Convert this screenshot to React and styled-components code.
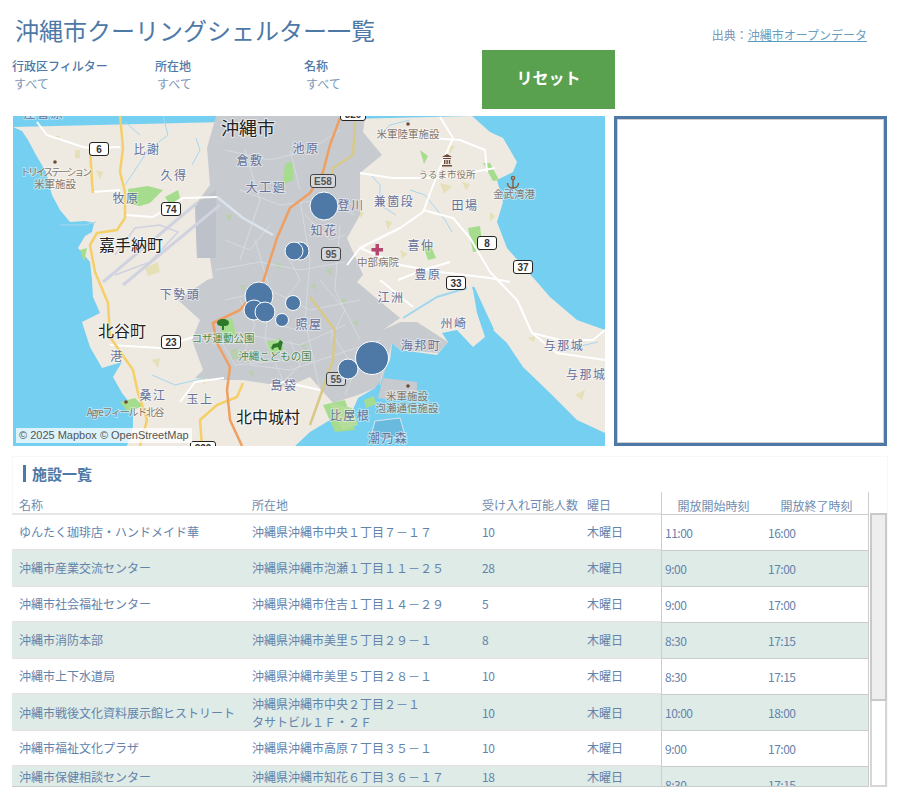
import React from 'react'
import styled, { createGlobalStyle } from 'styled-components'

const BLUE = '#4e79a7'

const GlobalStyle = createGlobalStyle`
  html, body {
    margin: 0;
    padding: 0;
    background: #fff;
    overflow: hidden;
  }
  body {
    font-family: "Noto Sans CJK JP", "Noto Sans", sans-serif;
    color: ${BLUE};
  }
`

const Page = styled.div`
  width: 899px;
  height: 799px;
  padding: 0 11px 0 12px;
  box-sizing: border-box;
`

const Header = styled.header`
  display: flex;
  justify-content: space-between;
  align-items: flex-start;
  height: 50px;
`

const Title = styled.h1`
  margin: 12px 0 0 3px;
  font-size: 24px;
  line-height: 36px;
  font-weight: 400;
  color: ${BLUE};
`

const Source = styled.div`
  margin: 26px 21px 0 0;
  font-size: 12px;
  line-height: 18px;
  color: #7b94b3;
`

const SourceLink = styled.a`
  color: #6a9fc0;
  text-decoration: underline;
  text-decoration-color: #5b9bbf;
`

const Filters = styled.div`
  display: grid;
  grid-template-columns: 143px 149px 178px 133px;
  height: 59px;
  margin-bottom: 7px;
`

const Filter = styled.div`
  padding-top: 7px;
`

const FilterLabel = styled.div`
  font-size: 12px;
  line-height: 18px;
  font-weight: 500;
  color: ${BLUE};
`

const FilterValue = styled.div`
  font-size: 12px;
  line-height: 18px;
  padding-left: 2px;
  color: #7d97b8;
`

const ResetButton = styled.button`
  border: none;
  background: #59a14f;
  color: #fff;
  font-family: inherit;
  font-size: 16px;
  font-weight: 700;
  padding: 0 0 6px;
`

const MapRow = styled.section`
  display: flex;
  gap: 9px;
  height: 331px;
`

const MapFrame = styled.div`
  position: relative;
  width: 592px;
  height: 330px;
  margin-left: 1px;
  overflow: hidden;
  background: #75cff0;
`

const MapSvg = styled.svg`
  display: block;
`

const Attribution = styled.div`
  position: absolute;
  left: 3px;
  bottom: 3px;
  padding: 0 3px;
  height: 15px;
  line-height: 15px;
  font-family: "Liberation Sans", sans-serif;
  font-size: 11px;
  color: #555;
  background: rgba(255, 255, 255, 0.75);
`

const SidePanel = styled.div`
  width: 273px;
  height: 330px;
  box-sizing: border-box;
  border: 3px solid ${BLUE};
  outline: 1px solid #cfcfcf;
  outline-offset: -4px;
  background: #fff;
`

const Card = styled.section`
  margin-top: 9px;
  width: 876px;
  height: 332px;
  box-sizing: border-box;
  border: 1px solid #f8f8f8;
  border-bottom: none;
`

const CardTitle = styled.h2`
  margin: 8px 0 0 10px;
  padding-left: 6px;
  border-left: 3px solid ${BLUE};
  font-size: 15px;
  line-height: 17px;
  font-weight: 700;
  color: ${BLUE};
`

const TableWrap = styled.div`
  display: flex;
  margin-top: 10px;
  height: 295px;
`

const Pane = styled.div`
  display: flex;
  flex-direction: column;
  height: 295px;
  box-sizing: border-box;
  border-bottom: 1px solid #cbcbcb;
  overflow: hidden;
  flex: none;
`

const LeftPane = styled(Pane)`
  width: 649px;
  margin-left: -1px;
`

const RightPane = styled(Pane)`
  width: 208px;
  border-left: 1px solid #cdcdcd;
  border-right: 1px solid #cdcdcd;
`

const LeftGrid = styled.div`
  display: grid;
  grid-template-columns: 233px 230px 105px 81px;
  align-items: center;
  flex: none;
`

const RightGrid = styled.div`
  display: grid;
  grid-template-columns: 103px 103px;
  align-items: center;
  flex: none;
`

const HeadLeft = styled(LeftGrid)`
  height: 23px;
  box-sizing: border-box;
  border-bottom: 2px solid #e6e6e6;
  align-items: end;
`

const HeadRight = styled(RightGrid)`
  height: 23px;
  box-sizing: border-box;
  border-bottom: 1px solid #cdcdcd;
  align-items: end;
`

const HeadCell = styled.div`
  padding-left: 7px;
  font-size: 12px;
  line-height: 16px;
  color: #6f8cb0;
  white-space: nowrap;
`

const HeadCellCenter = styled(HeadCell)`
  padding-left: 0;
  text-align: center;
`

const BodyLeft = styled(LeftGrid)`
  height: ${p => (p.$short ? 20 : 36)}px;
  box-sizing: border-box;
  background: ${p => (p.$striped ? '#deebe7' : '#fff')};
  border-bottom: ${p => (p.$short ? 'none' : '2px solid #e4e6e5')};
`

const BodyRight = styled(RightGrid)`
  height: 36px;
  box-sizing: border-box;
  background: ${p => (p.$striped ? '#deebe7' : '#fff')};
  border-bottom: 1px solid #cbcbcb;
`

const Cell = styled.div`
  padding-left: 7px;
  font-size: 12px;
  line-height: 18px;
  color: #6483ab;
  white-space: nowrap;
`

const NumberCell = styled(Cell)`
  letter-spacing: -0.5px;
`

const TimeCell = styled(NumberCell)`
  padding-left: 3px;
`

const Scrollbar = styled.div`
  position: relative;
  margin-top: 21px;
  margin-left: 1px;
  width: 18px;
  height: 274px;
  box-sizing: border-box;
  border: 2px solid #d6d6d6;
  border-top: none;
  background: #fff;
`

const Thumb = styled.div`
  position: absolute;
  left: -2px;
  right: -2px;
  top: 0;
  height: 188px;
  box-sizing: border-box;
  background: #eeeeee;
  border: 2px solid #c9c9c9;
`

const rows = [
  { name: 'ゆんたく珈琲店・ハンドメイド華', addr: ['沖縄県沖縄市中央１丁目７－１７'], cap: 10, open: '11:00', close: '16:00' },
  { name: '沖縄市産業交流センター', addr: ['沖縄県沖縄市泡瀬１丁目１１－２５'], cap: 28, open: '9:00', close: '17:00' },
  { name: '沖縄市社会福祉センター', addr: ['沖縄県沖縄市住吉１丁目１４－２９'], cap: 5, open: '9:00', close: '17:00' },
  { name: '沖縄市消防本部', addr: ['沖縄県沖縄市美里５丁目２９－１'], cap: 8, open: '8:30', close: '17:15' },
  { name: '沖縄市上下水道局', addr: ['沖縄県沖縄市美里５丁目２８－１'], cap: 10, open: '8:30', close: '17:15' },
  { name: '沖縄市戦後文化資料展示館ヒストリート', addr: ['沖縄県沖縄市中央２丁目２－１', 'タサトビル１Ｆ・２Ｆ'], cap: 10, open: '10:00', close: '18:00' },
  { name: '沖縄市福祉文化プラザ', addr: ['沖縄県沖縄市高原７丁目３５－１'], cap: 10, open: '9:00', close: '17:00' },
  { name: '沖縄市保健相談センター', addr: ['沖縄県沖縄市知花６丁目３６－１７'], cap: 18, open: '8:30', close: '17:15', short: true },
]

const land = '13,127 22,131 28,140 36,155 46,172 52,195 60,210 70,222 85,221 94,223 92,232 85,236 78,248 90,262 92,280 93,297 100,313 82,322 90,347 102,368 122,362 113,377 122,393 133,407 133,427 127,446 295,446 310,432 330,420 345,428 358,398 375,388 390,360 392,343 400,350 437,355 448,342 442,333 457,330 473,347 485,337 477,313 473,290 493,330 507,343 523,367 550,393 577,420 605,433 605,330 577,320 550,297 537,282 507,248 497,222 503,202 497,180 513,172 517,162 503,138 490,132 472,116'
const city = '216,116 207,148 210,185 195,205 197,258 210,258 213,278 207,280 178,300 200,320 192,340 203,370 195,378 223,380 243,380 287,387 310,377 333,403 358,395 375,388 383,378 417,382 417,392 395,400 378,398 392,343 400,350 438,353 448,342 417,322 400,322 383,330 400,318 357,282 363,275 347,238 360,215 360,173 382,155 363,132 365,116'
const base = '195,205 216,190 216,258 197,258'

const parks = [
  '128,189 148,186 163,190 150,203 140,206 130,204',
  '165,197 178,190 180,198 170,205',
  '80,250 87,248 84,262',
  '120,402 135,398 143,406 128,412',
  '219,322 232,318 236,335 224,340',
  '266,342 280,338 284,350 270,354',
  '323,405 345,400 355,430 335,432',
  '420,150 428,156 424,164',
  '483,163 490,163 499,180 493,181',
  '468,228 480,226 483,250 473,252',
  '424,248 430,244 436,258 428,260',
  '285,164 292,161 294,180 283,184',
  '364,400 374,396 376,404 366,408',
]

const cityPatches = [
  '240,285 246,285 244,292', '275,262 282,264 278,270', '230,350 238,348 240,358 232,360', '300,345 306,343 306,350',
  '325,270 332,268 332,276', '248,372 254,370 254,378', '310,285 316,284 316,291', '340,300 346,298 346,306',
  '352,322 358,320 358,326', '225,215 232,214 230,222',
]

const sand = [
  '52,136 60,136 58,140', '75,150 80,150 80,158 75,158', '96,170 103,172 100,180', '145,268 158,262 160,272 148,276',
  '448,145 455,146 450,154', '440,183 452,186 444,194', '462,182 470,184 466,190', '490,212 495,216 490,222',
  '385,220 392,222 388,230', '360,210 364,214 360,218', '400,250 408,254 402,258', '575,395 585,390 582,400',
  '152,360 160,358 158,368', '200,378 205,375 205,385', '528,338 535,336 534,342',
]

const whiteRoads = [
  '37,122 47,135 83,147 90,148 120,147',
  '93,192 120,190',
  '125,215 153,217 183,198 217,197',
  '110,345 160,348 193,337',
  '440,117 453,138 437,175 423,212 400,228 360,248 347,265',
  '423,210 453,218 470,238 490,272 517,300 532,333 557,353 605,360',
  '532,333 560,340 593,340 605,330',
  '380,280 413,307',
  '360,173 392,178 440,178 495,168',
  '395,136 460,140 485,150 487,172',
  '270,385 284,382 320,390',
  '180,402 195,382 224,378',
  '360,248 400,265 440,272 490,278 510,282',
  '398,280 423,270 450,262',
]

const cityStreets = [
  '225,150 270,160 310,150 340,130', '240,190 280,205 320,200 355,215', '215,270 260,262 300,270 345,262',
  '225,300 270,290 310,310 360,300', '215,345 250,335 300,345 345,325', '250,365 290,370 335,355 380,340',
  '255,240 270,290 265,340 285,385', '300,200 310,260 305,320 320,390', '340,225 335,290 360,340',
  '245,150 260,200 240,260', '290,150 300,190', '330,330 355,370 345,395', '215,330 235,365 290,360',
  '285,250 300,280 285,300', '240,300 255,325 245,350', '320,280 345,310 330,340', '275,325 300,330 320,320',
  '290,340 300,365 285,380', '360,350 385,360 380,385', '305,215 330,240 345,235', '225,240 250,250 270,225',
]

const streams = [
  '163,116 168,135 148,150 135,170 125,185', '196,138 200,150 192,165', '60,225 85,225 96,222',
  '372,176 380,185 380,205 396,215', '410,120 390,125 380,135', '125,122 140,135', '410,190 425,195 445,220 452,232',
  '560,352 585,345 598,342', '152,375 175,385 205,378',
]

const labels = [
  { t: '屋喜原', x: 44, y: 113, s: 12, c: 'place' },
  { t: '比謝', x: 147, y: 149, s: 12, c: 'place' }, { t: '久得', x: 174, y: 175, s: 12, c: 'place' },
  { t: '牧原', x: 126, y: 198, s: 12, c: 'place' }, { t: '倉敷', x: 250, y: 160, s: 12, c: 'place' },
  { t: '大工廻', x: 266, y: 187, s: 12, c: 'place' }, { t: '池原', x: 306, y: 148, s: 12, c: 'place' },
  { t: '下勢頭', x: 180, y: 294, s: 12, c: 'place' }, { t: '港', x: 117, y: 356, s: 12, c: 'place' },
  { t: '桑江', x: 153, y: 395, s: 12, c: 'place' }, { t: '玉上', x: 200, y: 399, s: 12, c: 'place' },
  { t: '島袋', x: 284, y: 385, s: 12, c: 'place' }, { t: '比屋根', x: 350, y: 415, s: 12, c: 'place' },
  { t: '潮乃森', x: 388, y: 438, s: 12, c: 'place' }, { t: '海邦町', x: 421, y: 345, s: 12, c: 'place' },
  { t: '江洲', x: 391, y: 297, s: 12, c: 'place' }, { t: '州崎', x: 454, y: 323, s: 12, c: 'place' },
  { t: '与那城', x: 564, y: 345, s: 12, c: 'place' }, { t: '与那城字', x: 593, y: 374, s: 12, c: 'place' },
  { t: '豊原', x: 428, y: 274, s: 12, c: 'place' }, { t: '喜仲', x: 421, y: 245, s: 12, c: 'place' },
  { t: '兼箇段', x: 394, y: 201, s: 12, c: 'place' }, { t: '田場', x: 465, y: 205, s: 12, c: 'place' },
  { t: '登川', x: 351, y: 205, s: 12, c: 'place' }, { t: '知花', x: 324, y: 230, s: 12, c: 'place' },
  { t: '照屋', x: 309, y: 324, s: 12, c: 'place' },
  { t: 'トリイステーション', x: 55, y: 172, s: 10, c: 'poi', ls: -2.2 }, { t: '米軍施設', x: 55, y: 184, s: 10.5, c: 'poi' },
  { t: 'Agreフィールド北谷', x: 125, y: 412, s: 10, c: 'poi', ls: -1.3 }, { t: '米軍施設', x: 407, y: 396, s: 10.5, c: 'poi' },
  { t: '泡瀬通信施設', x: 407, y: 408, s: 10.5, c: 'poi' }, { t: '中部病院', x: 378, y: 262, s: 10.5, c: 'poi' },
  { t: '金武湾港', x: 514, y: 194, s: 10.5, c: 'poi' }, { t: 'うるま市役所', x: 447, y: 174, s: 9.5, c: 'poi' },
  { t: '米軍陸軍施設', x: 408, y: 134, s: 10.5, c: 'poi' },
  { t: 'コザ運動公園', x: 223, y: 338, s: 10.5, c: 'park' }, { t: '沖縄こどもの国', x: 275, y: 356, s: 10.5, c: 'park' },
  { t: '沖縄市', x: 248, y: 128, s: 18, c: 'town' }, { t: '嘉手納町', x: 131, y: 245, s: 16, c: 'town' },
  { t: '北谷町', x: 122, y: 331, s: 16, c: 'town' }, { t: '北中城村', x: 268, y: 417, s: 16, c: 'town' },
]

const labelColors = { place: '#66729c', poi: '#86766a', park: '#4f8a4a', town: '#222' }

const shields = [
  { t: '6', x: 99, y: 149 }, { t: '74', x: 171, y: 209 }, { t: 'E58', x: 323, y: 181, dim: true }, { t: '95', x: 331, y: 254, dim: true },
  { t: '8', x: 487, y: 243 }, { t: '37', x: 523, y: 267 }, { t: '33', x: 456, y: 283 }, { t: '23', x: 171, y: 342 },
  { t: '55', x: 336, y: 379, dim: true }, { t: '329', x: 353, y: 114 }, { t: '329', x: 203, y: 448 },
]

const markers = [
  { x: 300, y: 251, r: 9 }, { x: 294, y: 251, r: 9 }, { x: 324, y: 206, r: 14 }, { x: 259, y: 296, r: 14 },
  { x: 254, y: 310, r: 10 }, { x: 265, y: 312, r: 10 }, { x: 293, y: 303, r: 7.5 }, { x: 282, y: 320, r: 6.5 },
  { x: 372, y: 358, r: 16.5 }, { x: 348, y: 369, r: 10 },
]

const Shield = ({ t, x, y, dim }) => {
  const w = t.length < 3 ? 19 : 25
  return (
    <g>
      <rect x={x - w / 2} y={y - 6.5} width={w} height={13} rx={2.5} fill={dim ? '#d5d8dc' : '#fff'} stroke={dim ? '#444' : '#222'} strokeWidth="1" />
      <text x={x} y={y + 3.5} textAnchor="middle" fontSize="10" fontWeight="700" fill={dim ? '#555' : '#333'} fontFamily="'Liberation Sans', sans-serif">{t}</text>
    </g>
  )
}

const MapDrawing = () => (
  <MapSvg width="592" height="330" viewBox="13 116 592 330">
    <rect x="13" y="116" width="592" height="330" fill="#75cff0" />
    <polygon points={land} fill="#eeeae2" />
    {sand.map((p, i) => <polygon key={i} points={p} fill="#e6e0b8" />)}
    <polygon points={city} fill="#c7cbcf" />
    <polygon points={base} fill="#b9bcc6" opacity="0.7" />
    <g fill="none" stroke="#d0d2e0" strokeWidth="3">
      <polyline points="103,282 197,203" />
      <polyline points="123,285 220,205" />
      <polyline points="115,255 135,228 160,225 178,232 150,262 115,275" strokeWidth="1.5" />
    </g>
    {parks.map((p, i) => <polygon key={i} points={p} fill="#a6dc8d" />)}
    {cityPatches.map((p, i) => <polygon key={i} points={p} fill="#b9cfae" />)}
    <polygon points="330,403 352,408 358,425 342,430" fill="#b5dd9a" />
    <polygon points="375,421 400,418 405,435 385,440 372,432" fill="#6ab9de" stroke="#dfe5ea" strokeWidth="1" />
    <polyline points="473,287 485,313 493,330" fill="none" stroke="#75cff0" strokeWidth="2.5" />
    <polyline points="467,288 437,297 403,318" fill="none" stroke="#9fd8ee" strokeWidth="2" />
    <g fill="none" stroke="#dadee3" strokeWidth="1" opacity="0.85">
      {cityStreets.map((p, i) => <polyline key={i} points={p} />)}
    </g>
    <g fill="none" stroke="#a8d6ef" strokeWidth="1">
      {streams.map((p, i) => <polyline key={i} points={p} />)}
    </g>
    <g fill="none" stroke="#fff" strokeWidth="2" strokeLinejoin="round">
      {whiteRoads.map((p, i) => <polyline key={i} points={p} />)}
    </g>
    <polyline points="217,197 243,218 273,235" fill="none" stroke="#dbe3ec" strokeWidth="2.5" />
    <g fill="none" stroke="#f5cf67" strokeWidth="2.5" strokeLinejoin="round">
      <polyline points="120,115 123,148 120,172 125,192 125,218 117,230 97,233 90,245 95,272 108,303 110,337 133,370 138,393 147,420 140,446" />
      <polyline points="90,148 92,182 93,193" />
      <polyline points="243,383 237,397 217,405 200,420 202,446" />
      <polyline points="355,122 353,155 333,168 330,182" stroke="#d8c88a" />
      <polyline points="310,297 335,330 333,360 320,397 310,425" stroke="#d8c88a" />
    </g>
    <polyline
      points="340,118 330,145 323,172 310,193 290,208 277,238 263,282 240,310 213,323 217,343 230,367 227,390 230,420 242,446"
      fill="none"
      stroke="#ef9f62"
      strokeWidth="2.5"
      strokeLinejoin="round"
    />
    {shields.map((s, i) => <Shield key={i} {...s} />)}
    {labels.map((l, i) => (
      <text
        key={i}
        x={l.x}
        y={l.y + l.s * 0.38}
        textAnchor="middle"
        fontSize={l.s}
        letterSpacing={l.ls !== undefined ? l.ls : l.c === 'place' ? 1.5 : 0}
        fill={labelColors[l.c]}
        stroke={l.c === 'town' ? 'rgba(255,255,255,0.6)' : 'rgba(255,255,255,0.45)'}
        strokeWidth="2"
        paintOrder="stroke"
        fontFamily="'Noto Sans CJK JP', sans-serif"
      >
        {l.t}
      </text>
    ))}
    <g fill="#6b4a3a">
      <circle cx="55" cy="162" r="1.8" />
      <circle cx="408" cy="124" r="1.8" />
      <circle cx="126" cy="402" r="1.8" />
      <circle cx="408" cy="386" r="1.8" />
      <path d="M447 154l5 3h-10zM443 158h8v1h-8zM444 160h1.4v4h-1.4zM446.4 160h1.4v4h-1.4zM448.8 160h1.4v4h-1.4zM442 165h10v1.5h-10z" />
    </g>
    <g fill="none" stroke="#8a5a3a" strokeWidth="1.4">
      <circle cx="513" cy="178" r="1.6" />
      <path d="M513 180v8M507.5 183c0 3 2.5 5 5.5 5s5.5-2 5.5-5" />
    </g>
    <path d="M375.5 244h3.5v4h4v3.5h-4v4h-3.5v-4h-4v-3.5h4z" fill="#b5476e" />
    <g fill="#2f7a2a">
      <path d="M223 319c4 0 6 2 6 4s-2 3-4 3h-1v4h-2v-4h-1c-2 0-4-1-4-3s2-4 6-4z" />
      <path d="M271 348l2-4 5-1 2-3 3 2-1 3-1 5h-2l-1-3-4 1-1 2z" />
    </g>
    {markers.map((m, i) => (
      <circle key={i} cx={m.x} cy={m.y} r={m.r} fill={BLUE} stroke="#fff" strokeWidth="1" />
    ))}
  </MapSvg>
)

const App = () => (
  <Page>
    <GlobalStyle />
    <Header>
      <Title>沖縄市クーリングシェルター一覧</Title>
      <Source>出典：<SourceLink href="#">沖縄市オープンデータ</SourceLink></Source>
    </Header>
    <Filters>
      <Filter>
        <FilterLabel>行政区フィルター</FilterLabel>
        <FilterValue>すべて</FilterValue>
      </Filter>
      <Filter>
        <FilterLabel>所在地</FilterLabel>
        <FilterValue>すべて</FilterValue>
      </Filter>
      <Filter>
        <FilterLabel>名称</FilterLabel>
        <FilterValue>すべて</FilterValue>
      </Filter>
      <ResetButton>リセット</ResetButton>
    </Filters>
    <MapRow>
      <MapFrame>
        <MapDrawing />
        <Attribution>© 2025 Mapbox © OpenStreetMap</Attribution>
      </MapFrame>
      <SidePanel />
    </MapRow>
    <Card>
      <CardTitle>施設一覧</CardTitle>
      <TableWrap>
        <LeftPane>
          <HeadLeft>
            <HeadCell>名称</HeadCell>
            <HeadCell>所在地</HeadCell>
            <HeadCell>受け入れ可能人数</HeadCell>
            <HeadCell>曜日</HeadCell>
          </HeadLeft>
          {rows.map((r, i) => (
            <BodyLeft key={r.name} $striped={i % 2 === 1} $short={r.short}>
              <Cell>{r.name}</Cell>
              <Cell>{r.addr.map(line => <div key={line}>{line}</div>)}</Cell>
              <NumberCell>{r.cap}</NumberCell>
              <Cell>木曜日</Cell>
            </BodyLeft>
          ))}
        </LeftPane>
        <RightPane>
          <HeadRight>
            <HeadCellCenter>開放開始時刻</HeadCellCenter>
            <HeadCellCenter>開放終了時刻</HeadCellCenter>
          </HeadRight>
          {rows.map((r, i) => (
            <BodyRight key={r.name} $striped={i % 2 === 1}>
              <TimeCell>{r.open}</TimeCell>
              <TimeCell>{r.close}</TimeCell>
            </BodyRight>
          ))}
        </RightPane>
        <Scrollbar>
          <Thumb />
        </Scrollbar>
      </TableWrap>
    </Card>
  </Page>
)

export default App
